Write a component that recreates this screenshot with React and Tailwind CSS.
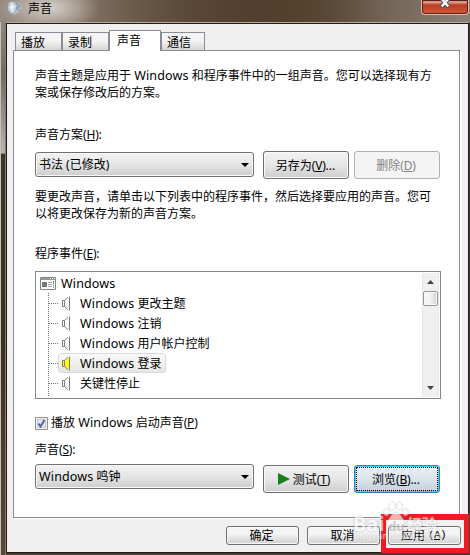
import React from 'react';

const W = ({ children }) => (
  <span className="text-[12.5px] tracking-[0.15px]">{children}</span>
);

const Key = ({ k }) => (
  <span className="text-[12px] tracking-[-0.2px]">
    (<span className="underline decoration-1 underline-offset-1">{k}</span>)
  </span>
);

const Arrow = () => (
  <svg width="8" height="4" viewBox="0 0 8 4">
    <path d="M0 0h8L4 4z" fill="#000" />
  </svg>
);

function Tab({ children, className }) {
  return (
    <div className={`flex h-[18px] items-center border border-b-0 border-[#8a8d99] bg-linear-to-b from-[#f4f4f4] from-45% to-[#d5d5d5] pt-px pl-[5px] ${className}`}>
      {children}
    </div>
  );
}

function Combo({ children, className }) {
  return (
    <div className={`flex h-[25px] w-[219px] items-center justify-between rounded-[3px] border border-[#707070] bg-linear-to-b from-[#f2f2f2] via-[#e6e6e6] to-[#cdcdcd] pr-1 pl-[3px] shadow-[inset_0_0_0_1px_#f8f8f8] ${className}`}>
      <span className="whitespace-nowrap">{children}</span>
      <Arrow />
    </div>
  );
}

function Button({ children, className }) {
  return (
    <div className={`flex h-7 w-[86px] items-center justify-center whitespace-nowrap rounded-[3px] border ${className}`}>
      {children}
    </div>
  );
}

const normal =
  'border-[#707070] bg-linear-to-b from-[#f2f2f2] via-[#e6e6e6] to-[#cdcdcd] pr-px shadow-[inset_0_0_0_1px_#f8f8f8]';

function FootButton({ children }) {
  return (
    <div className="flex h-[19px] w-[73px] items-center justify-center rounded-[3px] border border-[#707070] bg-linear-to-b from-[#f4f4f4] from-40% to-[#cfcfcf] pr-0.5 shadow-[inset_0_0_0_1px_#f8f8f8]">
      {children}
    </div>
  );
}

function Speaker({ active }) {
  return (
    <svg width="9" height="15" viewBox="0 0 9 15" className="shrink-0">
      <path d="M1 5h2L7 1.3V13.7L3 10H1z" fill={active ? '#ffff00' : '#fff'} />
      <path d="M.5 4.5h2v6h-2zM2.5 4.5L6 1.3M2.5 10.5L6 13.7M7.5.5v14" fill="none" stroke="#7c7c7c" />
    </svg>
  );
}

function Row({ children, active }) {
  return (
    <div className="flex h-5 items-center">
      <div className="w-[9px] shrink-0 border-t border-dotted border-[#777]" />
      <div
        className={`flex h-5 items-center rounded-[3px] border pr-[3px] pl-[3px] ${
          active ? 'border-[#d9d9d9] bg-linear-to-b from-[#fafafa] to-[#e5e5e5]' : 'border-transparent'
        }`}
      >
        <Speaker active={active} />
        <span className="ml-[9px] whitespace-nowrap">{children}</span>
      </div>
    </div>
  );
}

function ListBox() {
  return (
    <div className="mt-2 flex h-32 w-[406px] justify-between border border-[#828790] bg-white p-px">
      <div>
        <div className="flex h-5 items-center pl-[3px]">
          <svg width="16" height="13" viewBox="0 0 16 13">
            <path d="M.5.5h15v12H.5z" fill="#fff" stroke="#858585" />
            <path d="M1 1h14v2H1z" fill="#999" />
            <path d="M10 1h1v1h-1zM12 1h1v1h-1zM14 1h1v1h-1z" fill="#fff" />
            <path d="M2 5h5v5H2z" fill="#777" />
            <path d="M2 5h1v2H2zM13 4h1v2h-1z" fill="#179b95" />
            <path d="M8 5.5h4M8 7.5h4M8 9.5h4" stroke="#aaa" />
            <path d="M13.5 6v5" stroke="#aaa" />
          </svg>
          <span className="ml-[5px]"><W>Windows</W></span>
        </div>
        <div className="ml-[11px] h-[103px] border-l border-dotted border-[#777]">
          <Row><W>Windows</W> 更改主题</Row>
          <Row><W>Windows</W> 注销</Row>
          <Row><W>Windows</W> 用户帐户控制</Row>
          <Row active><W>Windows</W> 登录</Row>
          <Row>关键性停止</Row>
        </div>
      </div>
      <div className="flex w-[17px] flex-col items-center border-x border-[#e6e6e6] bg-[#f0f0f0]">
        <div className="flex h-[18px] items-center">
          <svg width="7" height="4" viewBox="0 0 7 4"><path d="M0 4L3.5 0 7 4z" fill="#444" /></svg>
        </div>
        <div className="h-[15px] w-[15px] rounded-[2px] border border-[#979797] bg-linear-to-r from-[#f5f5f5] from-45% to-[#cfcfd2] shadow-[inset_0_0_0_1px_#fafafa]" />
        <div className="flex-1" />
        <div className="flex h-[18px] items-center">
          <svg width="7" height="4" viewBox="0 0 7 4"><path d="M0 0h7L3.5 4z" fill="#444" /></svg>
        </div>
      </div>
    </div>
  );
}

function TitleBar() {
  return (
    <div className="relative flex h-[22px] items-start overflow-hidden bg-linear-to-r from-[#968c80] via-[#56432f] via-60% to-[#8b8177]">
      <div className="absolute -top-4 left-0 h-12 w-[100px] bg-[radial-gradient(closest-side,#d8d0ca,transparent)]" />
      <div className="absolute top-0 left-20 h-[22px] w-[300px] bg-linear-to-r from-transparent via-[#513e2c] via-60% to-transparent" />
      <svg className="relative ml-[7px]" width="15" height="16" viewBox="0 0 15 16">
        <path d="M1 3l3-2 4 1 5 1 2 4-2 4-5 4-4-1-3-4z" fill="#aebac2" />
        <ellipse cx="5.2" cy="7.5" rx="4.2" ry="5.8" fill="#dbe5ea" stroke="#8296a3" strokeWidth=".7" />
        <path d="M2 4l6 7M7 3L3 12M1.5 8h7" stroke="#a5b5bf" strokeWidth=".8" />
        <ellipse cx="5" cy="7.5" rx="1.6" ry="2.2" fill="#f6fafc" />
        <path d="M9 3l4 3-3 2 3 3" fill="none" stroke="#7e8b94" />
      </svg>
      <span className="relative ml-[6px] text-[12px] leading-[17px] text-black">声音</span>
      <div className="relative mr-[1px] ml-auto flex h-[15px] w-12 justify-center rounded-b-[4px] border border-t-0 border-[#e0b9ac] bg-linear-to-b from-[#d59582] from-20% via-[#bf391f] via-35% to-[#d05a38] shadow-[inset_0_0_0_1px_#5c211a]">
        <svg width="12" height="10" viewBox="0 0 12 10">
          <path d="M2.4 -1.6L9.6 7M9.6 -1.6L2.4 7" stroke="#4d5160" strokeWidth="4.4" />
          <path d="M2.8 -1.2L9.2 6.6M9.2 -1.2L2.8 6.6" stroke="#fff" strokeWidth="2.4" />
        </svg>
      </div>
    </div>
  );
}

function Watermark() {
  return (
    <div className="absolute top-[499px] left-[353px] h-12 w-24 font-bold text-white opacity-65 [text-shadow:0_0_2px_#999]">
      <svg className="absolute top-0.5 left-[30px]" width="26" height="28" viewBox="0 0 26 28" fill="#fff" stroke="#bbb" strokeWidth=".7">
        <ellipse cx="9" cy="5" rx="3" ry="4.3" />
        <ellipse cx="16.5" cy="5" rx="3" ry="4.3" />
        <ellipse cx="3.5" cy="11" rx="2.8" ry="3.7" />
        <ellipse cx="22.5" cy="11" rx="2.8" ry="3.7" />
        <path d="M13 11c-4 0-5 5-8 8-3 4 0 8 4 7h8c4 1 7-3 4-7-3-3-4-8-8-8z" />
      </svg>
      <div className="absolute top-[13px] left-0 flex items-center whitespace-nowrap leading-5">
        <span className="w-[33px] text-[20px]">Bai</span>
        <span className="w-[21px] pt-1 text-center text-[13px] text-[#bdb3b3] [text-shadow:none]">du</span>
        <span className="text-[15px]">经验</span>
      </div>
      <div className="absolute top-[31px] left-[1px] text-[9.5px] leading-3 font-normal tracking-[0.3px] whitespace-nowrap">jingyan.baidu.com</div>
    </div>
  );
}

export default function App() {
  return (
    <div className="relative flex h-[555px] w-[470px] flex-col overflow-hidden bg-[#4a3e30] font-['Noto_Sans','Noto_Sans_CJK_SC',sans-serif] text-[12px] leading-[17px] text-black">
      <TitleBar />
      <div className="flex h-[533px]">
        <div className="w-[6px] shrink-0 border-r border-l border-r-[#85796d] border-l-[#c5c1bc] bg-[linear-gradient(to_bottom,#91877d,#77685c_10%,#b8b5b0_24.6%,#3e3427_24.8%,#3e3020_60%,#574737)]" />
        <div className="w-[463px]">
          <div className="h-px bg-[#b5aba0]" />
          <div className="flex h-[530px] flex-col border border-[#211b17] bg-[#f0f0f0]">
            <div className="mt-1.5 ml-2 flex h-5 items-end">
              <Tab className="w-[47px]">播放</Tab>
              <Tab className="w-[47px]">录制</Tab>
              <div className="z-10 -mb-px flex h-[21px] w-[52px] items-center border border-b-0 border-[#8a8d99] bg-white pb-px pl-[7px]">声音</div>
              <Tab className="w-[44px] pl-[3px]">通信</Tab>
            </div>
            <div className="ml-1.5 h-[468px] w-[447px] border border-[#898c95] bg-white pl-[21px] shadow-[2px_1px_0_#fff]">
              <p className="mt-4 whitespace-nowrap">
                声音主题是应用于 <W>Windows</W> 和程序事件中的一组声音。您可以选择现有方<br />案或保存修改后的方案。
              </p>
              <div className="mt-[25px] h-[18px] leading-[18px]">声音方案<Key k="H" />:</div>
              <div className="mt-[7px] flex h-7">
                <Combo className="mt-px">书法 (已修改)</Combo>
                <Button className={`ml-[9px] ${normal}`}>另存为<Key k="V" />...</Button>
                <Button className="ml-[5px] border-[#adb2b5] bg-[#f4f4f4] pr-0.5 text-[#838383]">删除<Key k="D" /></Button>
              </div>
              <p className="mt-[9px] whitespace-nowrap">
                要更改声音，请单击以下列表中的程序事件，然后选择要应用的声音。您可<br />以将更改保存为新的声音方案。
              </p>
              <div className="mt-[23px] h-[18px] leading-[18px]">程序事件<Key k="E" />:</div>
              <ListBox />
              <div className="mt-[15px] flex h-[18px] items-center">
                <svg width="13" height="13" viewBox="0 0 13 13">
                  <path d="M.5.5h12v12H.5z" fill="#f4f4f4" stroke="#8e8f8f" />
                  <path d="M2.5 2.5h8v8h-8z" fill="#e3e6ea" stroke="#c4c8cc" />
                  <path d="M3.5 6.5L5.5 9.5L9.5 3" fill="none" stroke="#4b5fa0" strokeWidth="1.8" />
                </svg>
                <span className="ml-[3px] pb-px whitespace-nowrap">播放 <W>Windows</W> 启动声音<Key k="P" /></span>
              </div>
              <div className="mt-[9px] h-[18px] leading-[18px]">声音<Key k="S" />:</div>
              <div className="mt-[6px] flex h-7">
                <Combo className="-mt-px"><W>Windows</W> 鸣钟</Combo>
                <Button className={`ml-[9px] ${normal}`}>
                  <svg className="mr-[3px] -ml-[3px]" width="12" height="12" viewBox="0 0 12 12"><path d="M0 0l12 6L0 12z" fill="#17801a" /></svg>
                  测试<Key k="T" />
                </Button>
                <Button className="ml-[5px] border-[#3c7fb1] bg-linear-to-b from-[#eaf0f5] via-[#dbe4ea] to-[#c0d0dc] p-px shadow-[inset_0_0_0_1px_#3fd0f7]">
                  <div className="flex h-full w-full items-center justify-center border border-dotted border-black pr-0.5">浏览<Key k="B" />...</div>
                </Button>
              </div>
            </div>
            <div className="mt-2 ml-[219px] flex gap-2">
              <FootButton>确定</FootButton>
              <FootButton>取消</FootButton>
              <FootButton>应用<span className="ml-[3px] font-['Liberation_Mono'] text-[11px] tracking-[-0.6px]">(<u>A</u>)</span></FootButton>
            </div>
          </div>
        </div>
      </div>
      <div className="absolute top-[514px] left-[381px] h-[39px] w-[88px] border-[5px] border-t-[6px] border-[#ed1c24]" />
      <Watermark />
    </div>
  );
}
